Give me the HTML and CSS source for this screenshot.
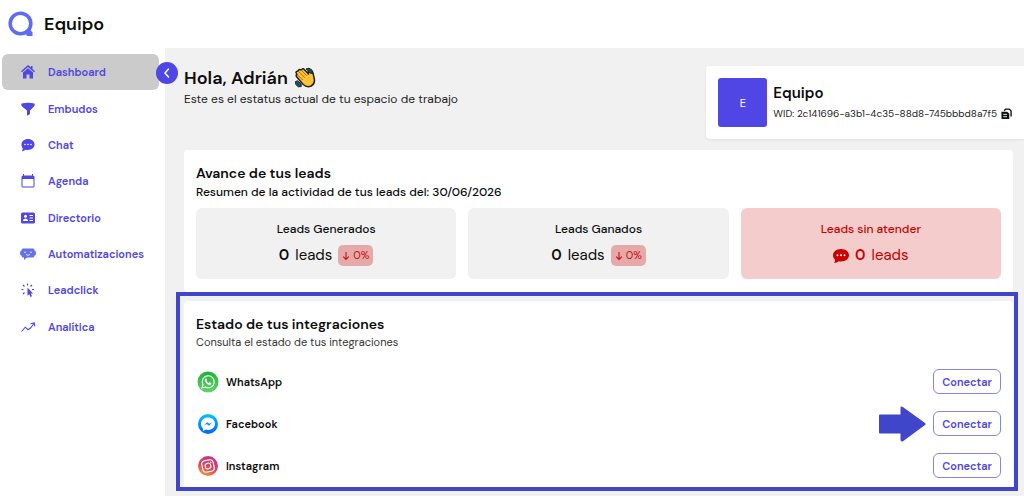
FILE: index.html
```html
<!DOCTYPE html>
<html lang="es">
<head>
<meta charset="utf-8">
<meta name="viewport" content="width=device-width, initial-scale=1">
<title>Equipo</title>
<link rel="stylesheet" href="styles.css">
</head>
<body>
<header class="topbar">
  <svg class="logo" viewBox="0 0 26 26"><circle cx="12.5" cy="12.5" r="10.3" fill="none" stroke="#5e6bf2" stroke-width="3.600"/><path d="M17 21l4-4 3.500 4.500V25H19z" fill="#5e6bf2"/></svg>
  <span class="brand">Equipo</span>
</header>
<div class="shell">
  <nav class="sidebar">
    <div class="nav-list">
    <a class="nav-item active" href="#">
      <svg class="nav-icon" viewBox="0 0 16 16"><path d="M8 1L1 7.200l1 1L8 3l6 5.200 1-1-2.500-2.200V2h-1.500v1.600z"/><path d="M8 4.200L3 8.600V14.500h3.500V10.500h3v4H13V8.600z"/></svg>
      Dashboard</a>
    <a class="nav-item" href="#">
      <svg class="nav-icon" viewBox="0 0 16 16"><path d="M1.500 2.500Q8 .8 14.500 2.500q.7 1.500-.3 2.800L10 9.500V13l-3 1.800V9.500L1.800 5.300q-1-1.300-.3-2.800z"/></svg>
      Embudos</a>
    <a class="nav-item" href="#">
      <svg class="nav-icon" viewBox="0 0 16 16"><path d="M8 2c3.700 0 6.500 2.400 6.500 5.600S11.700 13 8 13c-.8 0-1.500-.1-2.200-.3L2 14.500l.8-3.200C2 10.300 1.500 9 1.500 7.600 1.500 4.400 4.300 2 8 2z"/><g fill="#fff"><circle cx="5" cy="7.500" r=".8"/><circle cx="8" cy="7.500" r=".8"/><circle cx="11" cy="7.500" r=".8"/></g></svg>
      Chat</a>
    <a class="nav-item" href="#">
      <svg class="nav-icon" viewBox="0 0 16 16"><path d="M4 1v1.500h8V1h1v1.500q1.500 0 1.500 1.500v9q0 1.500-1.500 1.500H3Q1.500 14.500 1.500 13V4Q1.500 2.500 3 2.500V1zM2.500 6v7q0 .5.500.5h10q.5 0 .5-.5V6z" fill-rule="evenodd"/></svg>
      Agenda</a>
    <a class="nav-item" href="#">
      <svg class="nav-icon" viewBox="0 0 16 16"><rect x="1" y="2.500" width="14" height="11" rx="1.500"/><g fill="#fff"><circle cx="5.500" cy="6.300" r="1.500"/><path d="M2.800 11q.2-2.500 2.700-2.500T8.200 11zM9.500 5h3.500v1H9.500zM9.500 7.500h3.500v1H9.500zM9.500 10h3.500v1H9.500z"/></g></svg>
      Directorio</a>
    <a class="nav-item" href="#">
      <svg class="nav-icon" viewBox="0 0 16 16"><path d="M3 2.500h10q1.500 0 1.500 2 1.500 0 1.500 2.500t-1.500 2.500q0 2-1.500 2H7l-3 2.500v-2.500H3q-1.500 0-1.500-2Q0 9.500 0 7t1.500-2.500q0-2 1.500-2z" fill="#6470ee"/><path d="M4 6.500q1-1 2 0M10 6.500q1-1 2 0M6 8.500q2 1.500 4 0" fill="none" stroke="#fff" stroke-width=".8"/></svg>
      Automatizaciones</a>
    <a class="nav-item" href="#">
      <svg class="nav-icon" viewBox="0 0 16 16"><path d="M7.500 5.500l5.500 6-2.200.1 1.200 2.700-1.500.7-1.200-2.700-1.800 1.500z"/><path d="M7.500 3.500V1.500M4.500 4.500L3 3M3.500 7.500H1.500M4.500 10.500L3 12M10.500 4.500L12 3M12 7.500h2" fill="none" stroke="currentColor" stroke-width="1.200"/></svg>
      Leadclick</a>
    <a class="nav-item" href="#">
      <svg class="nav-icon" viewBox="0 0 16 16"><path d="M1.500 12.500l3.800-4.300 2.700 2.500 2.500-1.700L14 4.500M10.500 4.800l3.800-.8.500 3.500" fill="none" stroke="currentColor" stroke-width="1.100"/></svg>
      Analítica</a>
    </div>
    <button class="collapse" type="button" aria-label="Contraer menú"><svg viewBox="0 0 22 22"><path d="M12.500 7L9 11l3.500 4" fill="none" stroke="#fff" stroke-width="1.500" stroke-linecap="round"/></svg></button>
  </nav>
  <main class="main">
    <section class="intro">
      <div class="greeting">
        <h1>Hola, Adrián
          <svg class="wave" viewBox="0 0 22 22"><path d="M2.600 9.700Q1.500 8 3 7.500L2 5.700Q2 4 3.700 4.300L4.500 3.200Q5.500 1.800 7 3l1.300-1q1.200-.5 2.200.8L14.500 7l-.2-2.700Q14.600 3 16.300 3.500 19 4.500 19.200 7l1 4.500q1.200 5-3 7.500-4.300 2-8-1.500z" fill="#ffc234" stroke="#202020" stroke-width="1.500" stroke-linejoin="round"/><path d="M4.500 4.500l6.500 6.300M7.300 3.200l5.500 5.500M3 7.500l6 5.500" fill="none" stroke="#9a6a16" stroke-width=".9"/><path d="M12 2l3-.8 3 1.800.5 3.500-2.500-.5-2-2.500zM1.500 14.500l2-.7 3.500 3 .3 2.700-3 .3L1.800 17.500z" fill="#1b5360" stroke="#18262b" stroke-linejoin="round"/></svg>
        </h1>
        <p>Este es el estatus actual de tu espacio de trabajo</p>
      </div>
      <div class="workspace">
        <div class="avatar">E</div>
        <div class="workspace-text">
          <h2>Equipo</h2>
          <p>WID: 2c141696-a3b1-4c35-88d8-745bbbd8a7f5
            <button class="copy" type="button" aria-label="Copiar WID"><svg viewBox="0 0 12 12"><path d="M3.500 3L5 1.200h4l2 2v6" fill="none" stroke="#111" stroke-width="1.500"/><path d="M.5 4h6L9 6v6H.5z" fill="#111"/><path d="M2.500 7h4M2.500 9.500h4" stroke="#fff" stroke-width="1"/></svg></button></p>
        </div>
      </div>
    </section>
    <section class="card">
      <h2>Avance de tus leads</h2>
      <p class="summary">Resumen de la actividad de tus leads del: 30/06/2026</p>
      <div class="stats">
        <div class="stat">
          <h3>Leads Generados</h3>
          <div class="stat-value"><b>0</b><span>leads</span><span class="change"><svg viewBox="0 0 8 10"><path d="M4 1v7.500M1.200 5.700L4 8.500l2.800-2.800" fill="none" stroke="currentColor" stroke-width="1.100"/></svg>0%</span></div>
        </div>
        <div class="stat">
          <h3>Leads Ganados</h3>
          <div class="stat-value"><b>0</b><span>leads</span><span class="change"><svg viewBox="0 0 8 10"><path d="M4 1v7.500M1.200 5.700L4 8.500l2.800-2.800" fill="none" stroke="currentColor" stroke-width="1.100"/></svg>0%</span></div>
        </div>
        <div class="stat alert">
          <h3>Leads sin atender</h3>
          <div class="stat-value"><svg class="bubble" viewBox="0 0 16 16"><path d="M8 1c4.500 0 8 2.800 8 6.300S12.500 13.500 8 13.500c-.7 0-1.500-.1-2.200-.3Q4 15 1 15q1.200-1.500 1-3.200C.7 10.600 0 9.100 0 7.300 0 3.800 3.500 1 8 1z" fill="#cb0000"/><g fill="#fff"><circle cx="4.500" cy="7.300" r="1"/><circle cx="8" cy="7.300" r="1"/><circle cx="11.500" cy="7.300" r="1"/></g></svg><b>0</b><span>leads</span></div>
        </div>
      </div>
    </section>
    <div class="highlight">
      <section class="card integrations">
        <h2>Estado de tus integraciones</h2>
        <p class="hint">Consulta el estado de tus integraciones</p>
        <ul>
          <li>
            <svg class="service" viewBox="0 0 22 22"><defs><linearGradient id="wa" x2="0" y2="1"><stop stop-color="#20b038"/><stop offset="1" stop-color="#60d66a"/></linearGradient></defs><circle cx="11" cy="11" r="10.500" fill="url(#wa)"/><path d="M5 17l1-3.300a6 6 0 1 1 2.300 2.300z" fill="none" stroke="#fff" stroke-width="1.100"/><path d="M8.600 7.600q.8-.5 1.200.5l.3.900-.7.900q.7 1.500 2.300 2.200l.9-.9 1.500.8q.4.300 0 1-1 1.600-3.200.6Q8.800 12.300 7.900 10q-.4-1.500.7-2.400z" fill="#fff"/></svg>
            <span>WhatsApp</span><button class="connect" type="button" aria-label="Conectar WhatsApp">Conectar</button>
          </li>
          <li>
            <svg class="service" viewBox="0 0 22 22"><defs><linearGradient id="ms" x2="0" y2="1"><stop stop-color="#00c4fb"/><stop offset="1" stop-color="#0062ff"/></linearGradient></defs><circle cx="11" cy="11" r="10" fill="url(#ms)"/><path d="M11 4.500c4 0 7 2.700 7 6.200s-3 6.200-7 6.200c-.7 0-1.300-.1-2-.3L6 18v-2.300C4.900 14.500 4 12.700 4 10.700 4 7.200 7 4.500 11 4.500z" fill="#fff"/><path d="M7 12.500l3-3.300 2.300 1.600L15 9.400l-3 3.300-2.200-1.600z" fill="#0a86f7"/></svg>
            <span>Facebook</span>
            <svg class="pointer" viewBox="0 0 47 36"><path d="M1 8.500H21.500V2q0-2 2-1.200L46 17q1.200 1 0 2L24 35.200Q21.500 36 21.500 34V27.500H1Q0 27.500 0 26.500v-17q0-1 1-1z" fill="#4046cb"/></svg>
            <button class="connect" type="button" aria-label="Conectar Facebook">Conectar</button>
          </li>
          <li>
            <svg class="service" viewBox="0 0 22 22"><defs><linearGradient id="ig" x1=".7" x2=".25" y2="1"><stop stop-color="#c3328e"/><stop offset=".55" stop-color="#d8485f"/><stop offset="1" stop-color="#f59b3b"/></linearGradient></defs><circle cx="11" cy="11" r="10" fill="url(#ig)"/><g fill="none" stroke="#fff" stroke-width="1.100" transform="rotate(-12 11 11)"><rect x="5.200" y="5.200" width="11.600" height="11.600" rx="3.500"/><circle cx="11" cy="11" r="2.900"/></g><circle cx="13.800" cy="7.200" r=".7" fill="#fff"/></svg>
            <span>Instagram</span><button class="connect" type="button" aria-label="Conectar Instagram">Conectar</button>
          </li>
        </ul>
      </section>
    </div>
  </main>
</div>
</body>
</html>
```

FILE: styles.css
```css
* { box-sizing: border-box; }
body { margin: 0; background: #fff; color: #0c0c0c; font-family: "DM Sans", Inter, sans-serif; font-size: 11px; line-height: 16px; overflow-x: hidden; }
h1, h2, h3, p, ul { margin: 0; padding: 0; }
button { font-family: inherit; cursor: pointer; }
svg { flex: none; display: block; }

.topbar { display: flex; align-items: center; gap: 10px; height: 48px; padding-left: 8px; }
.logo { width: 26px; height: 26px; }
.brand { font-size: 18px; font-weight: 600; }

.shell { display: flex; min-height: calc(100vh - 48px); }
.sidebar { position: relative; flex: none; width: 165px; padding: 6px 6px 0 2px; }
.nav-list { display: grid; grid-auto-rows: 1fr; height: 291px; }
.nav-item { display: flex; align-items: center; gap: 12px; padding-left: 18px; border-radius: 6px; color: #4f46e5; font-weight: 600; text-decoration: none; }
.nav-item.active { background: #cbcbcb; }
.nav-icon { width: 16px; height: 16px; fill: currentColor; }
.collapse { position: absolute; top: 14px; right: -13px; width: 22px; height: 22px; padding: 0; border: 0; border-radius: 50%; background: #4f46e5; }

.main { flex: 1; min-width: 0; padding: 18px 11px 6px; background: #f1f1f1; }
.intro { display: flex; justify-content: space-between; align-items: flex-start; margin: 0 -11px 11px 8px; }
h1 { display: flex; align-items: center; gap: 6px; font-size: 18px; line-height: 24px; font-weight: 600; }
.greeting p { color: #222; font-size: 12px; line-height: 18px; }
.wave { width: 22px; height: 22px; }
.workspace { display: flex; align-items: center; gap: 6px; height: 73px; padding: 0 12px; border-radius: 4px 0 0 4px; background: #fff; box-shadow: 0 1px 3px #0001; white-space: nowrap; }
.avatar { display: grid; place-items: center; width: 49px; height: 49px; border-radius: 3px; background: #4f46e5; color: #fff; }
.workspace h2 { font-size: 15px; line-height: 22px; }
.workspace p { display: flex; align-items: center; gap: 4px; font-size: 10px; line-height: 20px; color: #222; }
.copy { width: 11px; height: 12px; padding: 0; border: 0; background: none; }

h2 { font-size: 14px; line-height: 18px; font-weight: 600; }
.card { margin: 0 0 0 8px; padding: 14px 12px 13px; border-radius: 4px; background: #fff; }
.summary { font-size: 12px; line-height: 20px; font-weight: 500; }
.stats { display: grid; grid-template-columns: repeat(3, 1fr); gap: 12px; margin-top: 6px; }
.stat { height: 71px; padding-top: 13px; border-radius: 6px; background: #f1f1f1; text-align: center; }
h3 { font-size: 12px; line-height: 17px; font-weight: 500; }
.stat-value { display: flex; justify-content: center; align-items: center; gap: 6px; margin-top: 7px; font-size: 15px; line-height: 21px; }
.stat-value b { font-weight: 600; }
.change { display: flex; align-items: center; gap: 3px; padding: 0 4px; border-radius: 5px; background: #e5a9a9; color: #cb0f0f; font-size: 11px; }
.change svg { width: 8px; height: 10px; }
.stat.alert { background: #f4cccc; color: #cb0000; }
.bubble { width: 16px; height: 16px; }

.highlight { margin: 0 -5px 0 0; padding: 5px 1px 0 4px; border: 4px solid #4046cb; }
.highlight .card { margin: 0; border-radius: 4px 4px 0 0; }
.card.integrations { padding: 14px 12px 9px; }
.hint { color: #333; line-height: 19px; font-size: 11px; }
ul { display: grid; gap: 17px; margin-top: 17px; list-style: none; }
li { display: flex; align-items: center; height: 25px; padding-left: 1px; font-weight: 600; }
li > span { flex: 1; padding-left: 7px; }
.service { width: 22px; height: 22px; }
.connect { width: 68px; height: 25px; padding: 0; border: 1px solid #8983ed; border-radius: 6px; background: #fff; color: #4f46e5; font-size: 11px; font-weight: 600; }
.pointer { width: 47px; height: 36px; margin-right: 7px; }
```
